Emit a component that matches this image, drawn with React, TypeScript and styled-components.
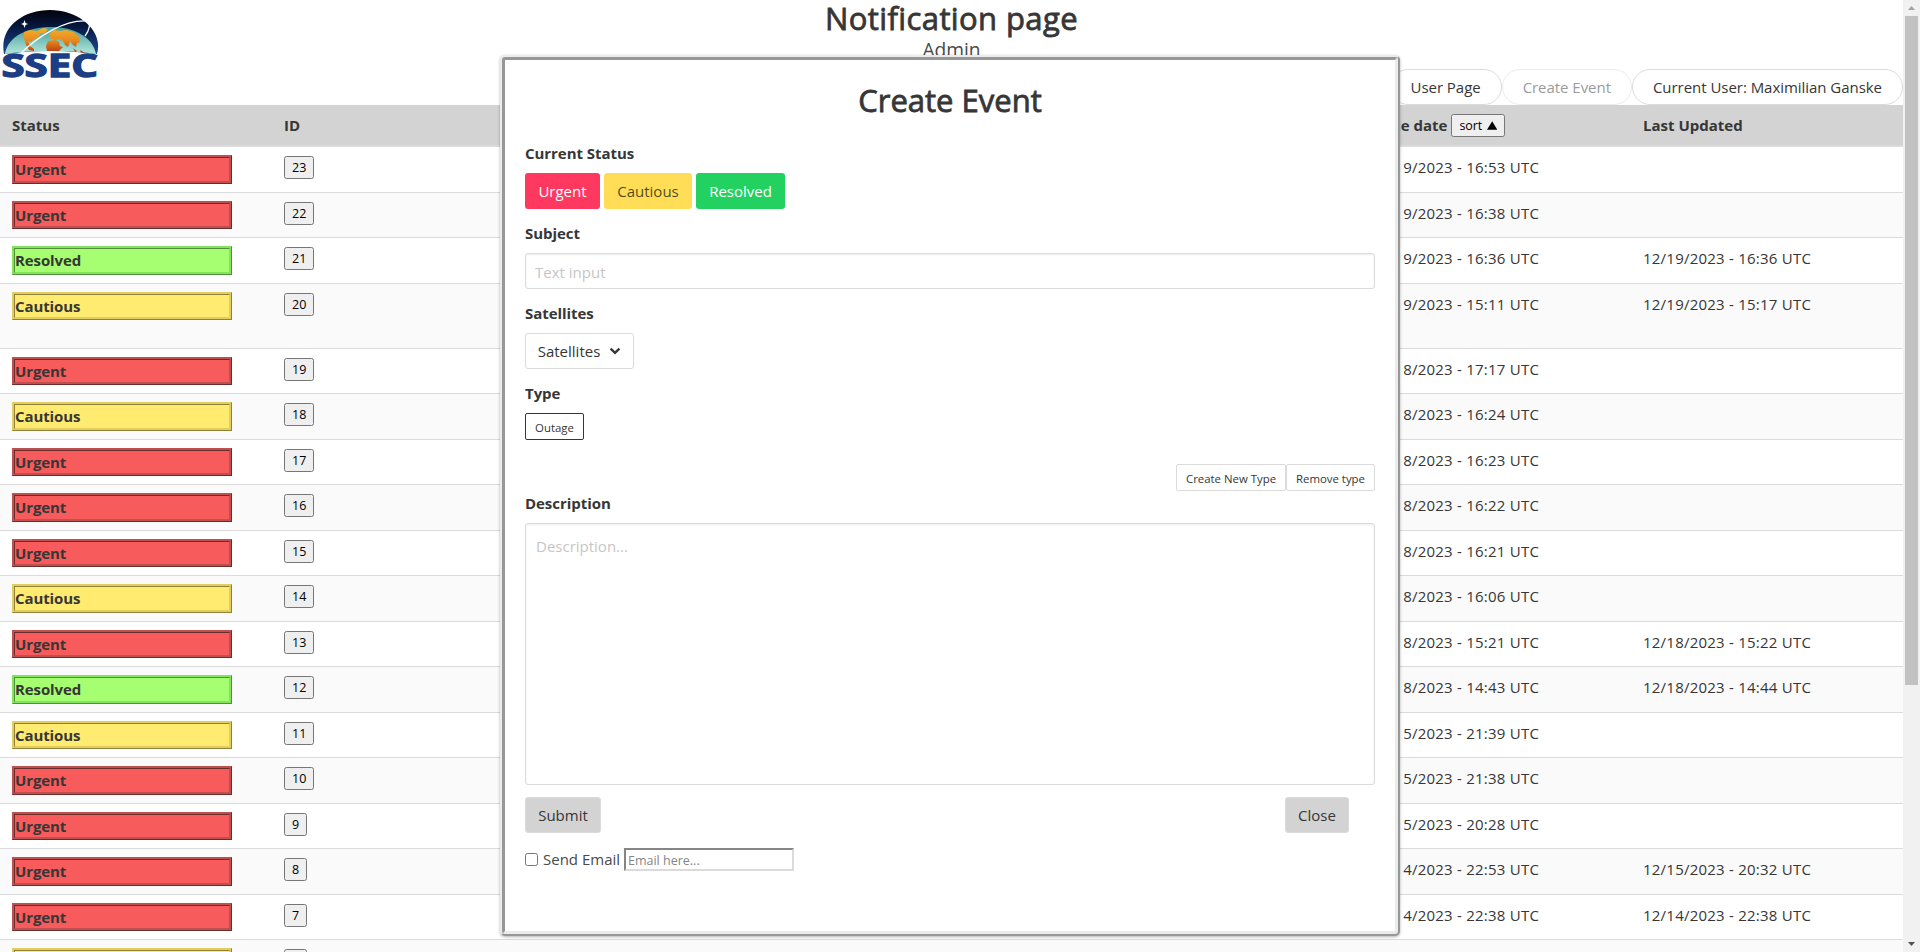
import React from 'react';
import styled, { createGlobalStyle, css } from 'styled-components';

const GlobalStyle = createGlobalStyle`
  *, *::before, *::after { box-sizing: border-box; }
  html, body { margin: 0; height: 952px; overflow: hidden; background: #fff; }
  body, button, input, textarea {
    font-family: 'Open Sans', 'Noto Sans', sans-serif;
    font-size: 15px;
    line-height: 24px;
    color: #363636;
  }
`;

type Status = 'Urgent' | 'Cautious' | 'Resolved';

const tones: Record<Status, { fill: string; edge: string }> = {
  Urgent: { fill: '#f75b5b', edge: '#bf5050' },
  Cautious: { fill: '#ffeb70', edge: '#e3cd5c' },
  Resolved: { fill: '#a5ff70', edge: '#82e35c' },
};

const Screen = styled.div`
  display: flex;
  height: 952px;
  overflow: hidden;
`;

const Page = styled.div`
  width: 1903px;
  flex: none;
  display: flex;
  flex-direction: column;
`;

const Header = styled.header`
  height: 105px;
  flex: none;
  display: grid;
  grid-template-columns: 360px 1fr 360px;
`;

const LogoBox = styled.div`
  padding: 9px 0 0 1px;
`;

const Heading = styled.div`
  text-align: center;
`;

const PageTitle = styled.h1`
  margin: 0;
  font-size: 31px;
  line-height: 36px;
  font-weight: 500;
  letter-spacing: 0.4px;
  -webkit-text-stroke: 0.8px #363636;
`;

const PageSubtitle = styled.p`
  margin: 2px 0 0;
  font-size: 19.2px;
  line-height: 24px;
  color: #4a4a4a;
`;

const Nav = styled.nav`
  display: flex;
  justify-content: flex-end;
  align-items: flex-end;
`;

const PillButton = styled.button<{ $muted?: boolean }>`
  flex: none;
  height: 36px;
  padding: 0 20px;
  border: 1px solid #dbdbdb;
  border-radius: 18px;
  background: #fff;
  white-space: nowrap;
  letter-spacing: -0.04px;
  opacity: ${(p) => (p.$muted ? 0.5 : 1)};
`;

const Table = styled.div`
  display: flex;
  flex-direction: column;
`;

const columns = css`
  display: grid;
  grid-template-columns: 272px 1087px 272px 272px;
`;

const HeadRow = styled.div`
  ${columns}
  height: 42px;
  background: #d3d3d3;
  border-bottom: 2px solid #dbdbdb;
  font-weight: 700;
`;

const HeadCell = styled.div`
  display: flex;
  align-items: center;
  gap: 4px;
  padding: 0 12px;
`;

const Row = styled.div<{ $tall?: boolean }>`
  ${columns}
  height: ${(p) => (p.$tall ? 65.4 : 45.5)}px;
  flex: none;
  border-bottom: 1px solid #dbdbdb;
  &:nth-child(odd) { background: #fafafa; }
`;

const Cell = styled.div`
  padding: 8px 12px;
`;

const DateCell = styled(Cell)`
  letter-spacing: 0.23px;
`;

const StatusBox = styled.div<{ $status: Status }>`
  width: 220px;
  height: 28.5px;
  border: 3px ridge ${(p) => tones[p.$status].edge};
  background: ${(p) => tones[p.$status].fill};
  font-weight: 700;
  line-height: 22px;
  letter-spacing: -0.1px;
`;

const SmallButton = styled.button`
  display: block;
  height: 23px;
  padding: 0 7px;
  margin-top: 1px;
  border: 1px solid #767676;
  border-radius: 2.5px;
  background: #efefef;
  color: #000;
  font-size: 12.5px;
  line-height: 21px;
`;

const SortButton = styled(SmallButton)`
  display: flex;
  align-items: center;
  gap: 5px;
  width: 54px;
  margin-top: 1px;
  letter-spacing: -0.1px;
`;

const ScrollTrack = styled.div`
  width: 17px;
  height: 952px;
  display: flex;
  flex-direction: column;
  align-items: center;
  justify-content: space-between;
  background: #f1f1f1;
`;

const ScrollArrow = styled.div`
  height: 16px;
  display: flex;
  align-items: center;
`;

const ScrollThumb = styled.div`
  width: 13px;
  height: 669px;
  margin-bottom: auto;
  background: #c1c1c1;
`;

const Modal = styled.section`
  position: absolute;
  left: 500px;
  top: 55px;
  width: 900px;
  height: 881px;
  padding: 20px;
  display: flex;
  flex-direction: column;
  border: 5px ridge #ebebeb;
  border-radius: 5px;
  background: #fff;
  box-shadow: 0 1px 3px rgba(0, 0, 0, 0.3);
`;

const ModalTitle = styled.h2`
  margin: 2px 0 28px;
  font-size: 31px;
  line-height: 36px;
  font-weight: 500;
  text-align: center;
  -webkit-text-stroke: 0.8px #363636;
`;

const Field = styled.div`
  display: flex;
  flex-direction: column;
  height: 80px;
`;

const Label = styled.label`
  margin-top: -5px;
  margin-bottom: 8px;
  font-weight: 700;
  height: 24px;
  letter-spacing: -0.05px;
`;

const ButtonRow = styled.div`
  display: flex;
  gap: 4px;
`;

const Button = styled.button<{ $bg?: string; $fg?: string; $border?: string; $w: number }>`
  width: ${(p) => p.$w}px;
  height: 36px;
  padding: 0;
  display: flex;
  align-items: center;
  justify-content: center;
  gap: 9px;
  border: 1px solid ${(p) => p.$border ?? 'transparent'};
  border-radius: 3px;
  background: ${(p) => p.$bg ?? '#fff'};
  color: ${(p) => p.$fg ?? '#363636'};
`;

const TinyButton = styled.button<{ $w: number; $dark?: boolean }>`
  width: ${(p) => p.$w}px;
  height: 27px;
  padding: 2px 0 0;
  border: 1px solid ${(p) => (p.$dark ? '#363636' : '#dbdbdb')};
  border-radius: 2px;
  background: #fff;
  font-size: 11.4px;
  line-height: 20px;
  white-space: nowrap;
`;

const TypeActions = styled.div`
  display: flex;
  justify-content: flex-end;
  margin-top: -2px;
  margin-bottom: 5px;
`;

const inputLook = css`
  width: 100%;
  border: 1px solid #dbdbdb;
  border-radius: 3px;
  background: #fff;
  box-shadow: inset 0 1px 2px rgba(10, 10, 10, 0.08);
  resize: none;
  outline: none;
  &::placeholder { color: #c6c6c6; opacity: 1; }
`;

const TextInput = styled.input`
  ${inputLook}
  height: 36px;
  padding: 2px 9px 0;
`;

const TextArea = styled.textarea`
  ${inputLook}
  height: 262px;
  flex: none;
  padding: 10px 10px;
`;

const Actions = styled.div`
  display: flex;
  justify-content: space-between;
  margin-top: 12px;
  padding-right: 26px;
`;

const EmailRow = styled.div`
  display: flex;
  align-items: center;
  margin-top: 15px;
  height: 23px;
  color: #4a4a4a;
`;

const Checkbox = styled.input`
  width: 13px;
  height: 13px;
  margin: 0 5px 1px 0;
`;

const EmailLabel = styled.span`
  width: 81px;
  padding-bottom: 2px;
  white-space: nowrap;
`;

const EmailInput = styled.input`
  width: 170px;
  height: 23px;
  padding: 1px 2px 0;
  border: 2px solid;
  border-color: #858585 #dbdbdb #dbdbdb #858585;
  background: #fff;
  font-size: 12.5px;
  line-height: 17px;
  &::placeholder { color: #858585; opacity: 1; }
`;

const Logo = () => (
  <svg width="100" height="90" viewBox="1 9 100 90">
    <defs>
      <linearGradient id="sky" x1="0" y1="0" x2="0" y2="1">
        <stop offset="0" stopColor="#02040c" />
        <stop offset="0.35" stopColor="#06153a" />
        <stop offset="1" stopColor="#1b4c96" />
      </linearGradient>
      <linearGradient id="sea" x1="0" y1="0" x2="0" y2="1">
        <stop offset="0" stopColor="#3f9c96" />
        <stop offset="1" stopColor="#b5e6dc" />
      </linearGradient>
      <linearGradient id="land" x1="0" y1="0" x2="0" y2="1">
        <stop offset="0" stopColor="#f3b02a" />
        <stop offset="0.5" stopColor="#e8891d" />
        <stop offset="1" stopColor="#b5380f" />
      </linearGradient>
    </defs>
    <path d="M4 54C-1 28 22 10 50 10S104 30 97 54C76 51 26 51 4 54Z" fill="url(#sky)" />
    <path d="M5 54C8 36 28 27 51 27S93 37 96 54C76 50 26 50 5 54Z" fill="url(#sea)" />
    <path
      d="M24 32L30 30L37 31L43 28L48 29L45 33L40 34L38 38L34 39L31 42L28 41L30 46L34 49L34 51L29 50L26 45L24 38ZM49 34L54 30L60 31L66 30L74 32L79 37L80 42L77 43L76 47L73 45L70 41L68 47L65 45L63 41L60 39L55 40L50 38ZM48 41L55 40L59 42L60 46L63 47L59 51L47 51L46 46ZM73 48L77 51L75 52ZM80 50L85 53L81 53Z"
      fill="url(#land)"
    />
    <path d="M19 55C39 35 65 20 86 21C92 22 89 31 85 36" fill="none" stroke="#fff" strokeWidth="1.3" />
    <path d="M24.5 20L25.5 23L28 24L25.5 25L24.5 28L23.5 25L21 24L23.5 23Z" fill="#fff" />
    <path d="M3 55Q50 47 98 55V58H3Z" fill="#fff" />
    <text
      x="1.5" y="77" fontFamily="Open Sans, sans-serif" fontWeight="700" fontSize="31.5"
      fill="#1b3e85" stroke="#1b3e85" strokeWidth="1.3" textLength="96.5" lengthAdjust="spacingAndGlyphs"
    >
      SSEC
    </text>
  </svg>
);

type EventRow = { status: Status; id: number; issued?: string; updated?: string; tall?: boolean };

const events: EventRow[] = [
  { status: 'Urgent', id: 23, issued: '12/19/2023 - 16:53 UTC' },
  { status: 'Urgent', id: 22, issued: '12/19/2023 - 16:38 UTC' },
  { status: 'Resolved', id: 21, issued: '12/19/2023 - 16:36 UTC', updated: '12/19/2023 - 16:36 UTC' },
  { status: 'Cautious', id: 20, issued: '12/19/2023 - 15:11 UTC', updated: '12/19/2023 - 15:17 UTC', tall: true },
  { status: 'Urgent', id: 19, issued: '12/18/2023 - 17:17 UTC' },
  { status: 'Cautious', id: 18, issued: '12/18/2023 - 16:24 UTC' },
  { status: 'Urgent', id: 17, issued: '12/18/2023 - 16:23 UTC' },
  { status: 'Urgent', id: 16, issued: '12/18/2023 - 16:22 UTC' },
  { status: 'Urgent', id: 15, issued: '12/18/2023 - 16:21 UTC' },
  { status: 'Cautious', id: 14, issued: '12/18/2023 - 16:06 UTC' },
  { status: 'Urgent', id: 13, issued: '12/18/2023 - 15:21 UTC', updated: '12/18/2023 - 15:22 UTC' },
  { status: 'Resolved', id: 12, issued: '12/18/2023 - 14:43 UTC', updated: '12/18/2023 - 14:44 UTC' },
  { status: 'Cautious', id: 11, issued: '12/15/2023 - 21:39 UTC' },
  { status: 'Urgent', id: 10, issued: '12/15/2023 - 21:38 UTC' },
  { status: 'Urgent', id: 9, issued: '12/15/2023 - 20:28 UTC' },
  { status: 'Urgent', id: 8, issued: '12/14/2023 - 22:53 UTC', updated: '12/15/2023 - 20:32 UTC' },
  { status: 'Urgent', id: 7, issued: '12/14/2023 - 22:38 UTC', updated: '12/14/2023 - 22:38 UTC' },
];

export default function App() {
  return (
    <>
      <GlobalStyle />
      <Screen>
        <Page>
          <Header>
            <LogoBox><Logo /></LogoBox>
            <Heading>
              <PageTitle>Notification page</PageTitle>
              <PageSubtitle>Admin</PageSubtitle>
            </Heading>
            <Nav>
              <PillButton>User Page</PillButton>
              <PillButton $muted>Create Event</PillButton>
              <PillButton>Current User: Maximilian Ganske</PillButton>
            </Nav>
          </Header>
          <Table>
            <HeadRow>
              <HeadCell>Status</HeadCell>
              <HeadCell>ID</HeadCell>
              <HeadCell>
                Issue date
                <SortButton>
                  sort
                  <svg width="11" height="9" viewBox="0 0 11 9"><path d="M5.5 0L11 9H0Z" /></svg>
                </SortButton>
              </HeadCell>
              <HeadCell>Last Updated</HeadCell>
            </HeadRow>
            {events.map((e) => (
              <Row key={e.id} $tall={e.tall}>
                <Cell><StatusBox $status={e.status}>{e.status}</StatusBox></Cell>
                <Cell><SmallButton>{e.id}</SmallButton></Cell>
                <DateCell>{e.issued}</DateCell>
                <DateCell>{e.updated}</DateCell>
              </Row>
            ))}
            <Row>
              <Cell><StatusBox $status="Cautious" /></Cell>
              <Cell><SmallButton>&nbsp;&nbsp;</SmallButton></Cell>
            </Row>
          </Table>
        </Page>
        <ScrollTrack>
          <ScrollArrow>
            <svg width="7" height="4" viewBox="0 0 7 4"><path d="M3.5 0L7 4H0Z" fill="#a3a3a3" /></svg>
          </ScrollArrow>
          <ScrollThumb />
          <ScrollArrow>
            <svg width="7" height="4" viewBox="0 0 7 4"><path d="M0 0H7L3.5 4Z" fill="#505050" /></svg>
          </ScrollArrow>
        </ScrollTrack>
      </Screen>
      <Modal>
        <ModalTitle>Create Event</ModalTitle>
        <Field>
          <Label>Current Status</Label>
          <ButtonRow>
            <Button $w={75} $bg="#ff3860" $fg="#fff">Urgent</Button>
            <Button $w={88} $bg="#ffdd57" $fg="rgba(0,0,0,0.7)">Cautious</Button>
            <Button $w={89} $bg="#23d160" $fg="#fff">Resolved</Button>
          </ButtonRow>
        </Field>
        <Field>
          <Label>Subject</Label>
          <TextInput placeholder="Text input" />
        </Field>
        <Field>
          <Label>Satellites</Label>
          <Button $w={109} $border="#dbdbdb">
            Satellites
            <svg width="12" height="8" viewBox="0 0 12 8">
              <path d="M1.6 1.6L6 5.8L10.4 1.6" fill="none" stroke="#363636" strokeWidth="2.4" />
            </svg>
          </Button>
        </Field>
        <Field>
          <Label>Type</Label>
          <TinyButton $w={59} $dark>Outage</TinyButton>
        </Field>
        <TypeActions>
          <TinyButton $w={110}>Create New Type</TinyButton>
          <TinyButton $w={89}>Remove type</TinyButton>
        </TypeActions>
        <Label>Description</Label>
        <TextArea placeholder="Description..." />
        <Actions>
          <Button $w={76} $bg="#d3d3d3" $border="#dbdbdb">Submit</Button>
          <Button $w={64} $bg="#d3d3d3" $border="#dbdbdb">Close</Button>
        </Actions>
        <EmailRow>
          <Checkbox type="checkbox" />
          <EmailLabel>Send Email</EmailLabel>
          <EmailInput placeholder="Email here..." />
        </EmailRow>
      </Modal>
    </>
  );
}
